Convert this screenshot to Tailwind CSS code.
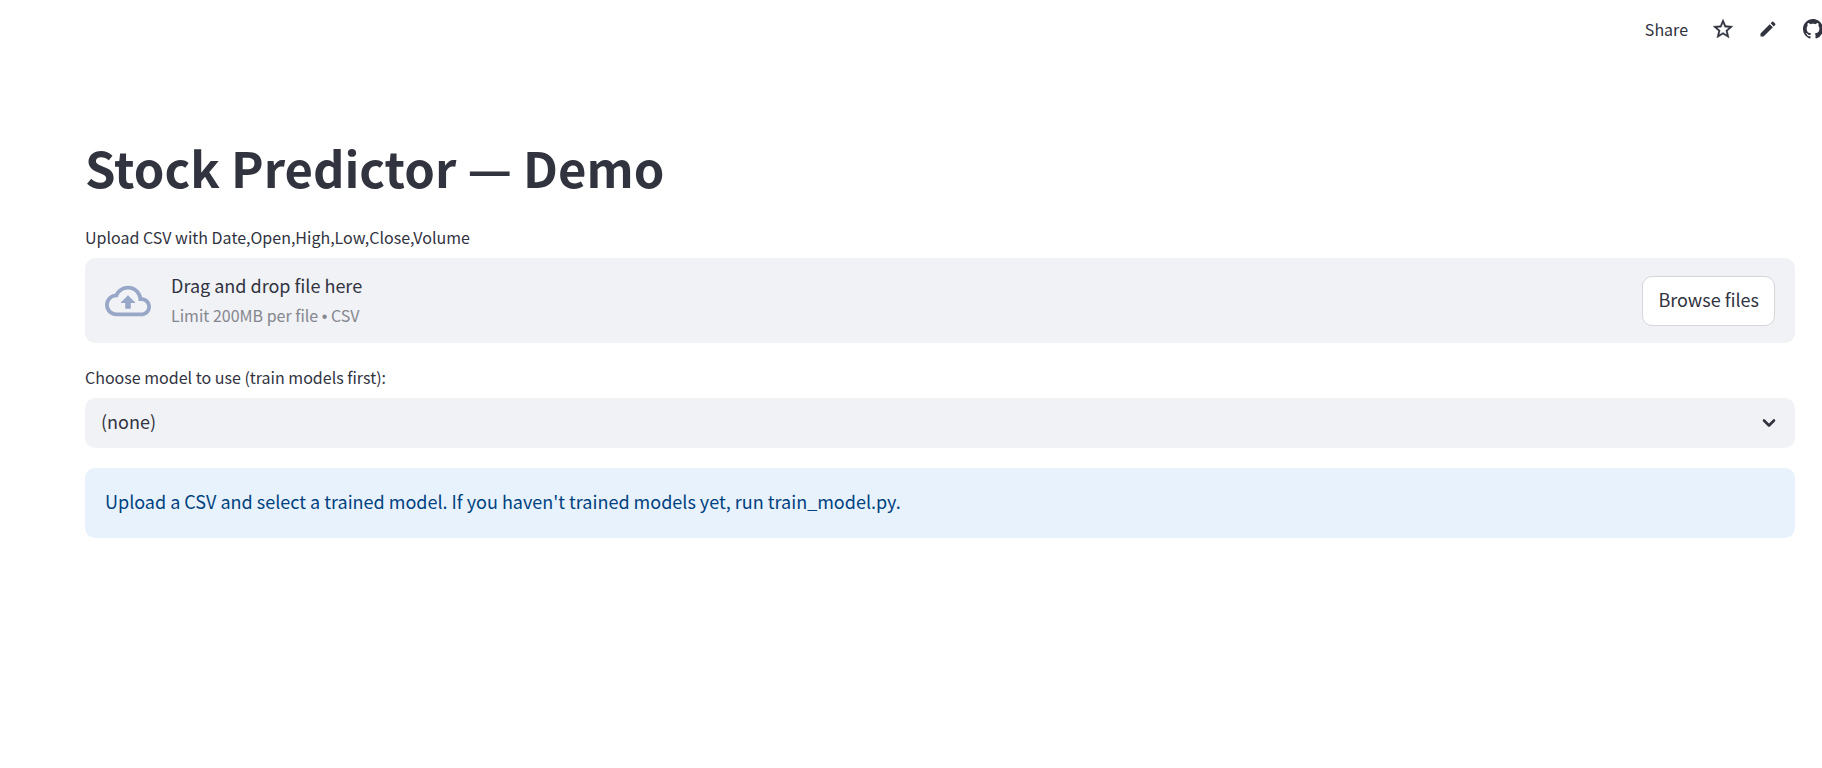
<!DOCTYPE html>
<html lang="en">
<head>
<meta charset="utf-8">
<title>Stock Predictor — Demo</title>
<script src="https://cdn.jsdelivr.net/npm/@tailwindcss/browser@4"></script>
</head>
<body class="min-h-screen overflow-x-hidden bg-white font-['Noto_Sans_CJK_SC',sans-serif] text-lg text-[#31333f]">
<header class="-mr-px flex h-[58px] items-center justify-end gap-[25px]">
  <button type="button" class="text-base leading-6">Share</button>
  <button type="button" aria-label="Favorite" class="flex size-5 items-center justify-center">
    <svg class="size-6 shrink-0" viewBox="0 0 24 24" fill="currentColor"><path d="M22 9.24l-7.19-.62L12 2 9.19 8.63 2 9.24l5.46 4.73L5.82 21 12 17.27 18.18 21l-1.63-7.03L22 9.24zM12 15.4l-3.76 2.27 1-4.28-3.32-2.88 4.38-.38L12 6.1l1.71 4.04 4.38.38-3.32 2.88 1 4.28L12 15.4z" stroke="currentColor" stroke-width=".3"/></svg>
  </button>
  <button type="button" aria-label="Edit" class="flex size-5 items-center justify-center">
    <svg class="size-5 shrink-0" viewBox="0 0 24 24" fill="currentColor"><path d="M3 17.25V21h3.75L17.81 9.94l-3.75-3.75L3 17.25zM20.71 7.04a1 1 0 0 0 0-1.41l-2.34-2.34a1 1 0 0 0-1.41 0l-1.83 1.83 3.75 3.75 1.83-1.83z"/></svg>
  </button>
  <a href="#" aria-label="View source on GitHub" class="flex size-5 items-center justify-center">
    <svg class="size-5 shrink-0" viewBox="0 0 16 16" fill="currentColor"><path d="M8 0C3.58 0 0 3.58 0 8c0 3.54 2.29 6.53 5.47 7.59.4.07.55-.17.55-.38 0-.19-.01-.82-.01-1.49-2.01.37-2.53-.49-2.69-.94-.09-.23-.48-.94-.82-1.13-.28-.15-.68-.52-.01-.53.63-.01 1.08.58 1.23.82.72 1.21 1.87.87 2.33.66.07-.52.28-.87.51-1.07-1.78-.2-3.64-.89-3.64-3.95 0-.87.31-1.59.82-2.15-.08-.2-.36-1.02.08-2.12 0 0 .67-.21 2.2.82.64-.18 1.32-.27 2-.27s1.36.09 2 .27c1.53-1.04 2.2-.82 2.2-.82.44 1.1.16 1.92.08 2.12.51.56.82 1.27.82 2.15 0 3.07-1.87 3.75-3.65 3.95.29.25.54.73.54 1.48 0 1.07-.01 1.93-.01 2.2 0 .21.15.46.55.38A8.01 8.01 0 0 0 16 8c0-4.42-3.58-8-8-8z"/></svg>
  </a>
</header>
<main class="pt-[76px] pr-[27px] pb-12 pl-[85px]">
  <h1 class="text-[49px] leading-[66px] font-bold">Stock Predictor — Demo</h1>
  <section class="mt-[25px]">
    <label for="file" class="block text-base leading-6">Upload CSV with Date,Open,High,Low,Close,Volume</label>
    <div class="mt-[9px] flex h-[85px] items-center rounded-[10px] bg-[#f0f2f6] px-5">
      <svg class="mr-5 size-[46px] shrink-0 text-[#98a7c7]" viewBox="0 0 24 24" fill="currentColor"><path d="M19.35 10.04A7.49 7.49 0 0 0 12 4C9.11 4 6.6 5.64 5.35 8.04A5.994 5.994 0 0 0 0 14c0 3.31 2.69 6 6 6h13c2.76 0 5-2.24 5-5 0-2.64-2.05-4.78-4.65-4.96zM19 18H6c-2.21 0-4-1.79-4-4s1.79-4 4-4h.71C7.37 7.69 9.48 6 12 6c3.04 0 5.5 2.46 5.5 5.5v.5H19c1.66 0 3 1.34 3 3s-1.34 3-3 3zM8 13h2.55v3h2.9v-3H16l-4-4z"/></svg>
      <div class="grow">
        <p class="leading-[30px]">Drag and drop file here</p>
        <p class="text-base leading-[30px] text-[#85868e]">Limit 200MB per file <span class="font-['Liberation_Sans',sans-serif]">•</span> CSV</p>
      </div>
      <input id="file" type="file" accept=".csv" class="hidden">
      <button type="button" class="h-[50px] rounded-[10px] border border-[#d6d6d8] bg-white px-[15px] pb-[3px]">Browse files</button>
    </div>
  </section>
  <section class="mt-[22px]">
    <label for="model" class="block text-base leading-6">Choose model to use (train models first):</label>
    <div class="mt-[9px] grid items-center">
      <select id="model" class="col-start-1 row-start-1 h-[50px] w-full appearance-none rounded-[10px] bg-[#f0f2f6] px-4 pb-1"><option>(none)</option></select>
      <svg class="pointer-events-none col-start-1 row-start-1 mr-[18px] h-4 w-4 justify-self-end" viewBox="0 0 16 16" fill="none" stroke="currentColor" stroke-width="2.6" stroke-linecap="round" stroke-linejoin="round"><path d="M3 5.5L8 10.5L13 5.5"/></svg>
    </div>
  </section>
  <div role="alert" class="mt-5 flex h-[70px] items-center rounded-[10px] bg-[#e8f2fc] px-5 pb-1 text-[#004280]">Upload a CSV and select a trained model. If you haven't trained models yet, run train_model.py.</div>
</main>
</body>
</html>
